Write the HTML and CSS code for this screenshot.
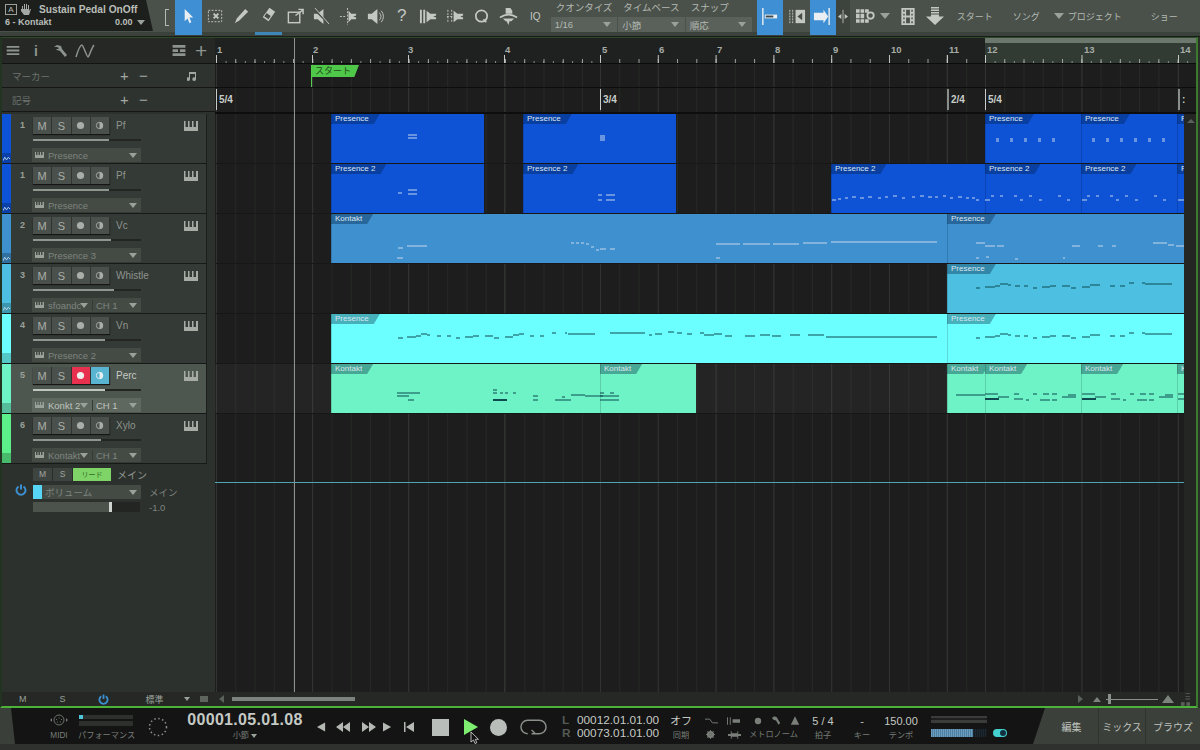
FILE: index.html
```html
<!DOCTYPE html>
<html lang="ja">
<head>
<meta charset="utf-8">
<title>Sustain Pedal OnOff</title>
<link rel="stylesheet" href="styles.css">
</head>
<body>

<svg class="defs" xmlns="http://www.w3.org/2000/svg">
    <symbol id="piano" viewBox="0 0 14 10">
        <path fill="currentColor" d="M0 0h1.500v6H4V0h1.500v6H8V0h1.500v6H12V0h2v10H0z"/>
    </symbol>
    <symbol id="mini-piano" viewBox="0 0 9 6">
        <path fill="currentColor" d="M0 0h1v3h1.500V0h1v3H5V0h1v3h1.500V0H9v6H0z"/>
    </symbol>
    <symbol id="wave" viewBox="0 0 8 6">
        <path fill="none" stroke="currentColor" d="M0 5 L2 1 L4 4 L6 1 L8 3"/>
    </symbol>
    <symbol id="rec" viewBox="0 0 10 10">
        <circle fill="currentColor" cx="5" cy="5" r="4"/>
    </symbol>
    <symbol id="mono" viewBox="0 0 10 10">
        <circle fill="none" stroke="currentColor" cx="5" cy="5" r="3.500"/>
        <path fill="currentColor" d="M5 1a4 4 0 0 1 0 8z"/>
    </symbol>
    <symbol id="power" viewBox="0 0 12 12">
        <path fill="none" stroke="currentColor" stroke-width="2" d="M3.500 2.500a4.500 4.500 0 1 0 5 0M6 0.500v5"/>
    </symbol>
</svg>

<header class="topbar">
    <div class="song">
        <div class="song-line">
            <span class="song-a">A</span>
            <svg class="song-hand" viewBox="0 0 12 12"><path fill="currentColor" d="M2 6V3h1v3h1V1h1v5h1V1h1v5h1V2h1v6l1-2h1l-2 6H4L1 8V6z"/></svg>
            <span class="song-title">Sustain Pedal OnOff</span>
        </div>
        <div class="song-line song-sub">
            <span class="song-track">6 - Kontakt</span>
            <span class="song-val">0.00</span>
            <span class="arrow song-arrow"></span>
        </div>
    </div>
    <div class="bracket"></div>
    <div class="tools">
        <div class="tool tool-on"><svg viewBox="0 0 20 20"><path fill="#e8eef2" d="M6 2l9 9h-4l2 5-2 1-2-5-3 3z"/></svg></div>
        <div class="tool"><svg viewBox="0 0 20 20"><rect x="2.500" y="3.500" width="14" height="12" fill="none" stroke="currentColor" stroke-dasharray="2 1.500"/><path stroke="currentColor" stroke-width="2" d="M8 7l5 5M13 7l-5 5"/></svg></div>
        <div class="tool"><svg viewBox="0 0 20 20"><path fill="currentColor" d="M14 2l3 3-9 9-5 3 2-5z"/></svg></div>
        <div class="tool tool-under"><svg viewBox="0 0 20 20"><path fill="currentColor" d="M11 3l6 4-7 10-6-4z"/><path fill="#474d46" d="M8 8l5 3.500-3 4-5-3.500z"/><path fill="none" stroke="currentColor" d="M8 8l5 3.500-3 4-5-3.500z"/></svg></div>
        <div class="tool"><svg viewBox="0 0 20 20"><rect x="2.500" y="5.500" width="12" height="11" fill="none" stroke="currentColor" stroke-width="1.500"/><path fill="none" stroke="currentColor" stroke-width="1.500" d="M10 9l8-6M13 2.500h5v5"/></svg></div>
        <div class="tool"><svg viewBox="0 0 20 20"><path fill="currentColor" d="M2 7h4l6-5v16l-6-5H2z"/><path stroke="#474d46" stroke-width="2" d="M2 2l16 16"/><path stroke="currentColor" d="M3 1l15 17"/></svg></div>
        <div class="tool"><svg viewBox="0 0 20 20"><path fill="currentColor" d="M10 4l3 3h5v2l-3 1 3 1v2h-5l-3 3z"/><path stroke="currentColor" stroke-dasharray="2 1.500" d="M9 1v18M1 10h7"/></svg></div>
        <div class="tool"><svg viewBox="0 0 20 20"><path fill="currentColor" d="M2 7h4l6-5v16l-6-5H2z"/><path fill="none" stroke="currentColor" d="M14 6a6 6 0 0 1 0 8M16 4a9 9 0 0 1 0 12"/></svg></div>
        <div class="tool tool-help">?</div>
        <div class="tool"><svg viewBox="0 0 20 20"><path fill="currentColor" d="M8 4l4 3h6v2l-3 1 3 1v2h-6l-4 3z"/><path stroke="currentColor" stroke-width="2" d="M2 3v14M5.500 3v14"/></svg></div>
        <div class="tool"><svg viewBox="0 0 20 20"><path fill="currentColor" d="M8 4l4 3h6v2l-3 1 3 1v2h-6l-4 3z"/><path stroke="currentColor" stroke-dasharray="2 1.500" d="M2 3v14M6 3v14M1 10h7"/></svg></div>
        <div class="tool"><svg viewBox="0 0 20 20"><circle cx="10" cy="9.500" r="6" fill="none" stroke="currentColor" stroke-width="1.800"/><path stroke="currentColor" stroke-width="1.800" d="M12 13l3 3"/></svg></div>
        <div class="tool"><svg viewBox="0 0 20 20"><path fill="currentColor" d="M7 1h5l2 3v3H7z"/><path fill="none" stroke="currentColor" stroke-width="1.800" d="M1 11q9-6 18 0"/><path fill="currentColor" d="M4 12h12l-3 3h-2l-1 4-2-4H7z"/></svg></div>
        <div class="tool tool-iq">IQ</div>
    </div>
    <div class="drops">
        <div class="drop"><span class="drop-label">クオンタイズ</span><div class="drop-box"><span>1/16</span><span class="arrow"></span></div></div>
        <div class="drop"><span class="drop-label">タイムベース</span><div class="drop-box"><span>小節</span><span class="arrow"></span></div></div>
        <div class="drop"><span class="drop-label">スナップ</span><div class="drop-box"><span>順応</span><span class="arrow"></span></div></div>
    </div>
    <div class="tool tool-on tool-snap"><svg viewBox="0 0 20 20"><path stroke="#e8eef2" stroke-width="1.500" d="M3 1v18"/><path fill="#e8eef2" d="M5 8h13v4H5z"/><path fill="#3f4a4f" d="M6 9h8v2H6z"/></svg></div>
    <div class="tool tool-snap2"><svg viewBox="0 0 20 20"><path stroke="currentColor" stroke-dasharray="2 1" d="M3 3v14M6 3v14"/><rect x="9" y="3" width="10" height="14" fill="currentColor"/><path fill="#474d46" d="M11 10l5-4v8z"/></svg></div>
    <div class="tool tool-on tool-snap"><svg viewBox="0 0 20 20"><path stroke="#e8eef2" stroke-width="1.500" d="M17 1v18"/><path fill="#e8eef2" d="M1 6h10V3l5 7-5 7v-3H1z"/></svg></div>
    <div class="tool tool-narrow"><svg viewBox="0 0 12 20"><path stroke="currentColor" d="M6 2v16"/><path fill="currentColor" d="M0 10l4-3v6zM12 10l-4-3v6z"/></svg></div>
    <div class="tool tool-grid"><svg viewBox="0 0 22 18"><path fill="currentColor" d="M0 1h4v4H0zM5 1h4v4H5zM10 1h4v4h-4zM0 6h4v5H0zM5 6h4v5H5zM0 12h4v4H0zM5 12h4v4H5zM10 12h4v4h-4z"/><circle cx="16" cy="8" r="3.500" fill="none" stroke="currentColor" stroke-width="2"/></svg><span class="arrow arrow-big"></span></div>
    <div class="tool tool-film"><svg viewBox="0 0 14 20"><path fill="currentColor" fill-rule="evenodd" d="M0 1h14v18H0zM2 3v2h1.500V3zM2 7v2h1.500V7zM2 11v2h1.500v-2zM2 15v2h1.500v-2zM10.500 3v2H12V3zM10.500 7v2H12V7zM10.500 11v2H12v-2zM10.500 15v2H12v-2zM5 3v6h4V3zM5 11v6h4v-6z"/></svg></div>
    <div class="tool tool-down"><svg viewBox="0 0 20 20"><path fill="currentColor" d="M6 1h8v1.500H6zM6 3.500h8V5H6zM6 6h8v1.500H6zM6 8.500h8v2h5L10 19 1 10.500h5z"/></svg></div>
    <div class="views">
        <span class="view view-start">スタート</span>
        <span class="view view-song">ソング</span>
        <span class="view view-project"><span class="arrow arrow-big"></span>プロジェクト</span>
        <span class="view view-show">ショー</span>
    </div>
</header>

<main class="main">
    <div class="workspace">

        <aside class="panel">
            <div class="panel-head">
                <svg class="ph-menu" viewBox="0 0 14 10"><path fill="currentColor" d="M0 0h14v2H0zM0 4h14v2H0zM0 8h14v2H0z"/></svg>
                <span class="ph-info">i</span>
                <svg class="ph-wrench" viewBox="0 0 14 14"><path fill="currentColor" d="M1 3l3-2 4 1 1 3 5 6-2 2-5-6-3-1-1-1 2 0 1-1-2-1z"/></svg>
                <svg class="ph-curve" viewBox="0 0 20 14"><path fill="none" stroke="currentColor" stroke-width="1.500" d="M1 13C4 3 6 1 7 1s5 12 6 12 3-8 6-12"/></svg>
                <svg class="ph-list" viewBox="0 0 14 12"><path fill="currentColor" d="M0 0h14v3H0zM0 4.500h6v3H0zM8 4.500h6v3H8zM0 9h14v3H0z"/></svg>
                <span class="ph-plus">+</span>
            </div>
            <div class="panel-row">
                <span class="row-label">マーカー</span>
                <span class="row-plus">+</span><span class="row-minus">−</span>
                <svg class="row-note" viewBox="0 0 10 10"><path fill="currentColor" d="M2 1h7v7a1.800 1.800 0 1 1-1-1.500V3H3v5a1.800 1.800 0 1 1-1-1.500z"/></svg>
            </div>
            <div class="panel-row">
                <span class="row-label">記号</span>
                <span class="row-plus">+</span><span class="row-minus">−</span>
            </div>

            <div class="tracks">
                <div class="track">
                    <div class="strip c-blue"><span class="strip-foot"><svg><use href="#wave"/></svg></span></div>
                    <span class="num">1</span>
                    <div class="body">
                        <div class="line">
                            <div class="btns"><span class="btn">M</span><span class="btn">S</span><span class="btn"><svg><use href="#rec"/></svg></span><span class="btn"><svg><use href="#mono"/></svg></span></div>
                            <span class="name">Pf</span>
                            <svg class="piano"><use href="#piano"/></svg>
                        </div>
                        <div class="fader"><div class="fader-fill" style="width:76px"></div></div>
                        <div class="select"><svg class="mini"><use href="#mini-piano"/></svg><span class="select-text">Presence</span><span class="arrow"></span></div>
                    </div>
                </div>
                <div class="track">
                    <div class="strip c-blue"><span class="strip-foot"><svg><use href="#wave"/></svg></span></div>
                    <span class="num">1</span>
                    <div class="body">
                        <div class="line">
                            <div class="btns"><span class="btn">M</span><span class="btn">S</span><span class="btn"><svg><use href="#rec"/></svg></span><span class="btn"><svg><use href="#mono"/></svg></span></div>
                            <span class="name">Pf</span>
                            <svg class="piano"><use href="#piano"/></svg>
                        </div>
                        <div class="fader"><div class="fader-fill" style="width:76px"></div></div>
                        <div class="select"><svg class="mini"><use href="#mini-piano"/></svg><span class="select-text">Presence</span><span class="arrow"></span></div>
                    </div>
                </div>
                <div class="track">
                    <div class="strip c-sky"><span class="strip-foot"><svg><use href="#wave"/></svg></span></div>
                    <span class="num">2</span>
                    <div class="body">
                        <div class="line">
                            <div class="btns"><span class="btn">M</span><span class="btn">S</span><span class="btn"><svg><use href="#rec"/></svg></span><span class="btn"><svg><use href="#mono"/></svg></span></div>
                            <span class="name">Vc</span>
                            <svg class="piano"><use href="#piano"/></svg>
                        </div>
                        <div class="fader"><div class="fader-fill" style="width:78px"></div></div>
                        <div class="select"><svg class="mini"><use href="#mini-piano"/></svg><span class="select-text">Presence 3</span><span class="arrow"></span></div>
                    </div>
                </div>
                <div class="track">
                    <div class="strip c-cyan"><span class="strip-foot"><svg><use href="#wave"/></svg></span></div>
                    <span class="num">3</span>
                    <div class="body">
                        <div class="line">
                            <div class="btns"><span class="btn">M</span><span class="btn">S</span><span class="btn"><svg><use href="#rec"/></svg></span><span class="btn"><svg><use href="#mono"/></svg></span></div>
                            <span class="name">Whistle</span>
                            <svg class="piano"><use href="#piano"/></svg>
                        </div>
                        <div class="fader"><div class="fader-fill" style="width:81px"></div></div>
                        <div class="select"><svg class="mini"><use href="#mini-piano"/></svg><span class="select-text select-cut">sfoandc</span><span class="arrow"></span><span class="select-ch">CH 1</span><span class="arrow"></span></div>
                    </div>
                </div>
                <div class="track">
                    <div class="strip c-aqua"><span class="strip-foot"></span></div>
                    <span class="num">4</span>
                    <div class="body">
                        <div class="line">
                            <div class="btns"><span class="btn">M</span><span class="btn">S</span><span class="btn"><svg><use href="#rec"/></svg></span><span class="btn"><svg><use href="#mono"/></svg></span></div>
                            <span class="name">Vn</span>
                            <svg class="piano"><use href="#piano"/></svg>
                        </div>
                        <div class="fader"><div class="fader-fill" style="width:72px"></div></div>
                        <div class="select"><svg class="mini"><use href="#mini-piano"/></svg><span class="select-text">Presence 2</span><span class="arrow"></span></div>
                    </div>
                </div>
                <div class="track track-sel">
                    <div class="strip c-mint"><span class="strip-foot"></span></div>
                    <span class="num">5</span>
                    <div class="body">
                        <div class="line">
                            <div class="btns"><span class="btn">M</span><span class="btn">S</span><span class="btn btn-rec"><svg><use href="#rec"/></svg></span><span class="btn btn-mon"><svg><use href="#mono"/></svg></span></div>
                            <span class="name">Perc</span>
                            <svg class="piano"><use href="#piano"/></svg>
                        </div>
                        <div class="fader"><div class="fader-fill" style="width:72px"></div></div>
                        <div class="select"><svg class="mini"><use href="#mini-piano"/></svg><span class="select-text select-cut">Konkt 2</span><span class="arrow"></span><span class="select-ch">CH 1</span><span class="arrow"></span></div>
                    </div>
                </div>
                <div class="track">
                    <div class="strip c-green"><span class="strip-foot"></span></div>
                    <span class="num">6</span>
                    <div class="body">
                        <div class="line">
                            <div class="btns"><span class="btn">M</span><span class="btn">S</span><span class="btn"><svg><use href="#rec"/></svg></span><span class="btn"><svg><use href="#mono"/></svg></span></div>
                            <span class="name">Xylo</span>
                            <svg class="piano"><use href="#piano"/></svg>
                        </div>
                        <div class="fader"><div class="fader-fill" style="width:68px"></div></div>
                        <div class="select"><svg class="mini"><use href="#mini-piano"/></svg><span class="select-text select-cut">Kontakt</span><span class="arrow"></span><span class="select-ch">CH 1</span><span class="arrow"></span></div>
                    </div>
                </div>
            </div>

            <div class="master">
                <div class="master-line">
                    <span class="mbtn">M</span><span class="mbtn">S</span><span class="mbtn mbtn-lead">リード</span>
                    <span class="master-name">メイン</span>
                </div>
                <div class="master-line master-auto">
                    <svg class="master-power"><use href="#power"/></svg>
                    <span class="master-color"></span>
                    <div class="select master-select"><span class="select-text">ボリューム</span><span class="arrow"></span></div>
                    <span class="master-label">メイン</span>
                </div>
                <div class="master-line master-vol">
                    <div class="master-fader"><span class="master-fill"></span><span class="master-knob"></span></div>
                    <span class="master-label">-1.0</span>
                </div>
            </div>
        </aside>

        <section class="timeline">
            <div class="grid">
                <div class="sec" style="width:384px;--bar:96px"></div>
                <div class="sec" style="width:347px;--bar:57.8px"></div>
                <div class="sec" style="width:38px;--bar:38px"></div>
                <div class="sec" style="width:212px;--bar:96.500px"></div>
            </div>

            <div class="ruler">
                <div class="loop"></div>
                <div class="ruler-ticks">
                    <div class="rsec rsec-fine" style="width:384px;--bar:96px"></div>
                    <div class="rsec" style="width:347px;--bar:57.8px"></div>
                    <div class="rsec" style="width:38px;--bar:38px"></div>
                    <div class="rsec rsec-fine" style="width:212px;--bar:96.500px"></div>
                </div>
                <span class="barnum" style="left:2px">1</span>
                <span class="barnum" style="left:98px">2</span>
                <span class="barnum" style="left:193px">3</span>
                <span class="barnum" style="left:290px">4</span>
                <span class="barnum" style="left:387px">5</span>
                <span class="barnum" style="left:444px">6</span>
                <span class="barnum" style="left:502px">7</span>
                <span class="barnum" style="left:560px">8</span>
                <span class="barnum" style="left:618px">9</span>
                <span class="barnum" style="left:676px">10</span>
                <span class="barnum" style="left:734px">11</span>
                <span class="barnum" style="left:772px">12</span>
                <span class="barnum" style="left:869px">13</span>
                <span class="barnum" style="left:965px">14</span>
            </div>
            <div class="marker-row">
                <div class="flag"><span class="flag-tag">スタート</span></div>
            </div>
            <div class="sig-row">
                <span class="sig" style="left:1px">5/4</span>
                <span class="sig" style="left:385px">3/4</span>
                <span class="sig sig-thick" style="left:732px">2/4</span>
                <span class="sig" style="left:770px">5/4</span>
                <span class="sig sig-thick" style="left:963px">:</span>
            </div>

            <div class="lanes">
                <div class="lane">
                    <div class="clip c-blue" style="left:116px;width:153px"><span class="tag">Presence</span></div>
                    <div class="clip c-blue" style="left:308px;width:153px"><span class="tag">Presence</span></div>
                    <div class="clip c-blue" style="left:770px;width:96px"><span class="tag">Presence</span></div>
                    <div class="clip c-blue" style="left:866px;width:96px"><span class="tag">Presence</span></div>
                    <div class="clip c-blue" style="left:962px;width:7px"><span class="tag">P</span></div>
                    <svg class="notes" viewBox="215 0 969 50"><path class="n-light" d="M408 21h9M408 24h9M600 22h5M600 24h5M600 26h5"/><path class="n-light" stroke-dasharray="3 11" d="M996 25h70M996 27h70M1092 25h80M1092 27h80"/></svg>
                </div>
                <div class="lane">
                    <div class="clip c-blue" style="left:116px;width:153px"><span class="tag">Presence 2</span></div>
                    <div class="clip c-blue" style="left:308px;width:153px"><span class="tag">Presence 2</span></div>
                    <div class="clip c-blue" style="left:616px;width:154px"><span class="tag">Presence 2</span></div>
                    <div class="clip c-blue" style="left:770px;width:96px"><span class="tag">Presence 2</span></div>
                    <div class="clip c-blue" style="left:866px;width:96px"><span class="tag">Presence 2</span></div>
                    <div class="clip c-blue" style="left:962px;width:7px"><span class="tag">P</span></div>
                    <svg class="notes" viewBox="215 0 969 50"><path class="n-light" d="M398 29h4M408 26h9M408 30h9M598 31h4M606 31h9M598 36h4M606 36h9M832 36h4M838 35h3M845 34h3M852 33h4M860 34h4M868 33h4M878 34h3M885 33h3M893 32h4M902 34h3M912 33h3M920 32h4M928 33h4M935 33h3M943 32h3M950 34h3M958 33h4M966 34h3M972 34h3M976 36h3M985 36h5M991 32h3M1000 32h3M1014 32h3M1020 36h3M1029 32h3M1039 36h3M1058 32h3M1067 36h3M1082 36h5M1087 32h3M1096 32h3M1110 32h3M1116 36h3M1125 32h3M1135 36h3M1154 32h3M1163 36h3M1178 36h6"/></svg>
                </div>
                <div class="lane">
                    <div class="clip c-sky" style="left:116px;width:616px"><span class="tag">Kontakt</span></div>
                    <div class="clip c-sky" style="left:732px;width:237px"><span class="tag">Presence</span></div>
                    <svg class="notes" viewBox="215 0 969 50"><path class="n-light" d="M398 34h5M407 32h20M397 44h6M571 29h3M576 29h3M581 29h3M586 30h3M591 33h3M596 36h3M600 35h6M610 35h5M716 30h24M743 30h27M773 30h26M803 29h24M831 28h106M716 44h4M976 29h9M985 32h10M997 32h7M1072 32h8M1098 32h5M1112 32h4M1153 29h14M1168 31h6M1176 32h8M976 44h3M986 43h3M1015 45h3M1063 44h2"/></svg>
                </div>
                <div class="lane">
                    <div class="clip c-cyan" style="left:732px;width:237px"><span class="tag">Presence</span></div>
                    <svg class="notes" viewBox="215 0 969 50"><path class="n-dark" d="M976 24h4M985 23h10M995 22h5M1000 20h8M1008 21h3M1015 22h5M1024 22h4M1033 24h4M1042 23h8M1050 22h6M1062 22h8M1071 24h5M1082 23h8M1090 21h10M1110 22h5M1120 22h5M1129 19h5M1142 19h3M1145 20h27"/></svg>
                </div>
                <div class="lane">
                    <div class="clip c-aqua" style="left:116px;width:616px"><span class="tag">Presence</span></div>
                    <div class="clip c-aqua" style="left:732px;width:237px"><span class="tag">Presence</span></div>
                    <svg class="notes" viewBox="215 0 969 50"><path class="n-dark" d="M398 24h5M407 23h9M416 22h5M421 20h6M427 21h3M437 22h4M447 22h4M456 24h4M465 23h8M473 22h6M485 22h8M494 24h5M505 23h8M513 21h6M519 20h5M530 22h4M540 22h4M552 19h4M565 19h2M568 20h27M610 19h35M649 21h3M655 20h7M668 18h6M677 19h5M687 20h5M700 19h4M704 21h10M714 20h8M725 22h7M745 22h10M760 21h10M772 22h9M790 21h10M808 21h16M826 23h111M976 24h4M985 23h10M995 22h5M1000 20h8M1008 21h3M1015 22h5M1024 22h4M1033 24h4M1042 23h8M1050 22h6M1062 22h8M1071 24h5M1082 23h8M1090 21h10M1110 22h5M1120 22h5M1129 19h5M1142 19h3M1145 20h27"/></svg>
                </div>
                <div class="lane lane-sel">
                    <div class="clip c-mint" style="left:116px;width:269px"><span class="tag">Kontakt</span></div>
                    <div class="clip c-mint" style="left:385px;width:96px"><span class="tag">Kontakt</span></div>
                    <div class="clip c-mint" style="left:732px;width:38px"><span class="tag">Kontakt</span></div>
                    <div class="clip c-mint" style="left:770px;width:96px"><span class="tag">Kontakt</span></div>
                    <div class="clip c-mint" style="left:866px;width:96px"><span class="tag">Kontakt</span></div>
                    <div class="clip c-mint" style="left:962px;width:7px"><span class="tag">K</span></div>
                    <svg class="notes" viewBox="215 0 969 50"><path class="n-dark" d="M397 29h23M397 32h12M408 36h6M493 26h4M493 29h4M500 29h3M505 29h3M513 29h3M533 32h5M533 36h5M555 36h16M562 33h3M571 31h14M585 32h18M600 29h4M610 29h4M600 32h19M600 36h19M956 31h29M985 30h13M998 33h11M1014 30h5M1014 35h9M1026 36h3M1033 30h4M1040 36h10M1043 30h6M1052 30h5M1052 36h5M1062 33h14M1068 31h8M1082 30h13M1095 33h11M1111 30h5M1111 35h9M1123 36h3M1130 30h4M1137 36h10M1140 30h6M1149 30h5M1149 36h5M1159 33h14M1165 31h8M1178 30h6M1178 35h6"/><path class="n-thick" d="M493 36h14M985 35h14M1082 35h14"/></svg>
                </div>
                <div class="lane"></div>
            </div>

            <div class="auto-line"></div>
            <div class="playhead"></div>
            <div class="vscroll"><span class="vscroll-up"></span></div>
        </section>
    </div>

    <div class="bottombar">
        <span class="bb-m">M</span>
        <span class="bb-s">S</span>
        <svg class="bb-power"><use href="#power"/></svg>
        <span class="bb-std">標準</span>
        <span class="arrow"></span>
        <svg class="bb-lines" viewBox="0 0 10 6"><path fill="currentColor" d="M0 0h10v1H0zM0 2.500h10v1H0zM0 5h10v1H0z"/></svg>
        <span class="bb-left"></span>
        <div class="hscroll"></div>
        <span class="bb-right"></span>
        <span class="zoom-small"></span>
        <div class="zoom-track"><span class="zoom-knob"></span></div>
        <span class="zoom-big"></span>
        <svg class="bb-corner" viewBox="0 0 10 14"><path fill="currentColor" d="M5 0h5v1H5zM5 3h5v1H5zM5 6h5v1H5zM0 10h4v4H0zM6 10h4v4H6z"/></svg>
    </div>
</main>

<footer class="transport">
    <span class="wedge"></span>
    <div class="tp tp-midi">
        <svg viewBox="0 0 20 14"><circle cx="10" cy="7" r="5" fill="none" stroke="currentColor"/><path fill="currentColor" d="M7 6h1v1H7zM9.500 4.500h1v1h-1zM12 6h1v1h-1zM8 8.500h1v1H8zM11 8.500h1v1h-1zM1 7l2-2v4zM19 7l-2-2v4z"/></svg>
        <span class="tp-label">MIDI</span>
    </div>
    <div class="tp tp-perf">
        <div class="meter"><span class="meter-led"></span></div>
        <div class="meter meter-low"></div>
        <span class="tp-label">パフォーマンス</span>
    </div>
    <svg class="spinner" viewBox="0 0 20 20"><circle cx="10" cy="10" r="8.500" fill="none" stroke="currentColor" stroke-width="1.500" stroke-dasharray="1.500 2.500"/></svg>
    <div class="tp tp-time">
        <span class="time-main">00001.05.01.08</span>
        <span class="tp-label">小節 <span class="arrow"></span></span>
    </div>
    <div class="transport-btns">
        <svg viewBox="0 0 10 10" class="tb-1"><path fill="currentColor" d="M0 5l9-5v10z"/></svg>
        <svg viewBox="0 0 15 10" class="tb-2"><path fill="currentColor" d="M0 5l7-5v10zM7 5l7-5v10z"/></svg>
        <svg viewBox="0 0 15 10" class="tb-3"><path fill="currentColor" d="M14 5L7 0v10zM7 5L0 0v10z"/></svg>
        <svg viewBox="0 0 10 10" class="tb-4"><path fill="currentColor" d="M9 5L0 0v10z"/></svg>
        <svg viewBox="0 0 10 10" class="tb-5"><path fill="currentColor" d="M0 0h1.500v10H0zM10 0v10L2 5z"/></svg>
        <span class="stop"></span>
        <div class="play-wrap">
            <svg class="play" viewBox="0 0 14 16"><path fill="#7dee6f" d="M0 0l14 8-14 8z"/></svg>
            <svg class="cursor" viewBox="0 0 10 14"><path fill="#111" stroke="#ddd" stroke-width="0.800" d="M1 1v10l2.500-2 1.500 3.500 1.800-.8L5.300 8.300H8.500z"/></svg>
        </div>
        <span class="record"></span>
        <svg class="loop-btn" viewBox="0 0 28 16"><path fill="none" stroke="currentColor" stroke-width="1.500" d="M8 15C4 15 1 12 1 8s3-7 7-7h12c4 0 7 3 7 7s-3 7-7 7h-4M12 11l4 4-4 0"/></svg>
    </div>
    <div class="locators">
        <div class="loc"><span class="loc-key">L</span><span>00012.01.01.00</span></div>
        <div class="loc"><span class="loc-key">R</span><span>00073.01.01.00</span></div>
    </div>
    <div class="tp tp-sync"><span class="tp-val">オフ</span><span class="tp-label">同期</span></div>
    <div class="metro">
        <div class="metro-icons">
            <svg viewBox="0 0 14 8"><path fill="none" stroke="currentColor" d="M0 2h5l3 4h6"/></svg>
            <svg viewBox="0 0 14 8"><path fill="currentColor" d="M0 0h1v8H0zM3 0h1v8H3zM6 2h8v4H6z"/></svg>
            <svg viewBox="0 0 10 10" class="metro-dot"><circle cx="5" cy="5" r="4" fill="currentColor"/></svg>
            <svg viewBox="0 0 12 10" class="metro-small"><path fill="currentColor" d="M1 2l3-2 3 1 1 2 3 5-2 2-3-5-3-1z"/></svg>
            <svg viewBox="0 0 12 10" class="metro-small"><path fill="currentColor" d="M6 0l5 10H1z"/></svg>
        </div>
        <div class="metro-bottom">
            <svg viewBox="0 0 10 10" class="metro-gear"><circle cx="5" cy="5" r="3" fill="none" stroke="currentColor" stroke-width="2"/><path stroke="currentColor" d="M5 0v10M0 5h10M1.500 1.500l7 7M8.500 1.500l-7 7"/></svg>
            <svg viewBox="0 0 14 8" class="metro-pin"><path fill="currentColor" d="M0 3h14v2H0zM3 0h1v8H3zM10 0h1v8h-1zM4 2h6v4H4z"/></svg>
            <span class="tp-label">メトロノーム</span>
        </div>
    </div>
    <div class="tp tp-beat"><span class="tp-val">5 / 4</span><span class="tp-label">拍子</span></div>
    <div class="tp tp-key"><span class="tp-val">-</span><span class="tp-label">キー</span></div>
    <div class="tp tp-tempo"><span class="tp-val">150.00</span><span class="tp-label">テンポ</span></div>
    <div class="levels">
        <div class="lvl lvl-top"></div>
        <div class="lvl-row">
            <div class="lvl lvl-on"><span class="lvl-fill"></span></div>
            <span class="toggle"><span class="toggle-dot"></span></span>
        </div>
    </div>
    <div class="tabs">
        <span class="tab tab-edit">編集</span>
        <span class="tab tab-mix">ミックス</span>
        <span class="tab tab-browse">ブラウズ</span>
    </div>
</footer>

</body>
</html>
```

FILE: styles.css
```css
html, body {
    margin: 0;
    padding: 0;
}

body {
    width: 1200px;
    height: 750px;
    overflow: hidden;
    display: flex;
    flex-direction: column;
    background: #2b2f2b;
    color: #b4b9b3;
    font-family: "Liberation Sans", "Noto Sans CJK JP", sans-serif;
    font-size: 10px;
}

svg {
    display: block;
}

.defs {
    position: absolute;
    width: 0;
    height: 0;
}

.arrow {
    display: inline-block;
    flex: none;
    width: 0;
    height: 0;
    border-left: 4px solid transparent;
    border-right: 4px solid transparent;
    border-top: 5px solid #9aa09a;
}
.arrow-big {
    border-left-width: 5px;
    border-right-width: 5px;
    border-top-width: 6px;
}

/* colours shared by track strips and clips */
.c-blue { background: #0e52d6; }
.c-sky { background: #3e90cf; }
.c-cyan { background: #4dc0e2; }
.c-aqua { background: #6cffff; }
.c-mint { background: #6df3c6; }
.c-green { background: #5cf08a; }

/* top toolbar */
.topbar {
    flex: none;
    height: 36px;
    display: flex;
    background: linear-gradient(#4a514a 0, #4a514a 32px, #3b413b 32px);
    border-bottom: 1px solid #1a1c1a;
}

.song {
    flex: none;
    width: 153px;
    height: 31px;
    padding: 3px 0 0 5px;
    box-sizing: border-box;
    background: #1d1f1d;
    clip-path: polygon(0 0, 146px 0, 153px 100%, 0 100%);
    font-weight: bold;
    color: #b9beb8;
}
.song-line {
    display: flex;
    align-items: center;
}
.song-a {
    width: 10px;
    height: 9px;
    margin-right: 3px;
    border: 1px solid #9a9f9a;
    font-size: 8px;
    font-weight: normal;
    line-height: 9px;
    text-align: center;
}
.song-hand {
    width: 12px;
    height: 12px;
    margin-right: 7px;
    color: #a5a9a5;
}
.song-title {
    font-size: 10.200px;
}
.song-sub {
    margin-top: 2px;
    font-size: 9px;
}
.song-track {
    width: 110px;
}
.song-val {
    margin-right: 4px;
}

.bracket {
    flex: none;
    width: 3px;
    height: 15px;
    margin: 9px 6px 0 12px;
    border: 1px solid #b4b9b3;
    border-right: 0;
}

.tools {
    flex: none;
    display: flex;
}
.tool {
    flex: none;
    box-sizing: border-box;
    width: 26.700px;
    height: 32px;
    display: flex;
    align-items: center;
    justify-content: center;
    color: #c4c8c3;
}
.tool svg {
    width: 19px;
    height: 19px;
}
.tool-on {
    height: 35px;
    padding-bottom: 3px;
    background: #3f8fd4;
}
.tool-under {
    height: 35px;
    padding-bottom: 3px;
    border-bottom: 3px solid #3f86b8;
}
.tool-help {
    font-size: 17px;
}
.tool-iq {
    font-size: 10px;
}
.tool-snap {
    width: 26px;
}
.tool-snap2 {
    width: 27px;
}
.tool-narrow {
    width: 14px;
    background: #3d433d;
}
.tool-narrow svg {
    width: 10px;
}
.tool-grid {
    width: 46px;
    gap: 4px;
}
.tool-grid svg {
    width: 20px;
    flex: none;
}
.tool-film {
    width: 24px;
}
.tool-film svg {
    width: 14px;
}
.tool-down {
    width: 30px;
}
.tool-down svg {
    width: 20px;
    height: 20px;
}

.drops {
    flex: none;
    display: flex;
    width: 204px;
    margin-left: 2px;
    margin-right: 2px;
}
.drop {
    flex: none;
    width: 67.500px;
    padding-right: 1px;
    box-sizing: border-box;
    display: flex;
    flex-direction: column;
}
.drop-label {
    height: 17px;
    padding-left: 5px;
    font-size: 9.500px;
    line-height: 16px;
    color: #b4b9b3;
}
.drop-box {
    height: 15px;
    padding: 0 6px 0 4px;
    display: flex;
    align-items: center;
    justify-content: space-between;
    background: #5a615a;
    font-size: 9.500px;
}

.views {
    flex: 1;
    display: flex;
    align-items: center;
    height: 32px;
    font-size: 9px;
    color: #b4b9b3;
}
.view {
    display: flex;
    align-items: center;
    gap: 4px;
    white-space: nowrap;
}
.view-start { margin-left: 7px; }
.view-song { margin-left: 20px; }
.view-project { margin-left: 14px; }
.view-show { margin-left: 29px; }

/* green framed main area */
.main {
    flex: none;
    height: 671px;
    margin-right: 2px;
    display: flex;
    flex-direction: column;
    box-sizing: border-box;
    border-left: 2px solid #233322;
    border-top: 1px solid #2c4a28;
    border-right: 2px solid #3c7a2c;
    border-bottom: 2px solid #4db23a;
}

.workspace {
    flex: none;
    height: 654px;
    display: flex;
}

/* track column */
.panel {
    flex: none;
    width: 213px;
    display: flex;
    flex-direction: column;
    background: #2c312d;
    color: #a2a7a2;
}

.panel-head {
    flex: none;
    height: 26px;
    display: flex;
    align-items: center;
    background: #252825;
    border-bottom: 1px solid #121312;
    box-sizing: border-box;
    color: #8d938e;
}
.ph-menu {
    width: 14px;
    height: 9px;
    margin-left: 4px;
}
.ph-info {
    margin-left: 14px;
    font-size: 14px;
    font-weight: bold;
}
.ph-wrench {
    width: 14px;
    height: 14px;
    margin-left: 15px;
}
.ph-curve {
    width: 20px;
    height: 14px;
    margin-left: 8px;
}
.ph-list {
    width: 14px;
    height: 11px;
    margin-left: 77px;
}
.ph-plus {
    margin-left: 9px;
    font-size: 21px;
    line-height: 21px;
}

.panel-row {
    flex: none;
    height: 24px;
    box-sizing: border-box;
    display: flex;
    align-items: center;
    border-bottom: 1px solid #151615;
    background: #2e332f;
    color: #6d736e;
    font-size: 9.500px;
}
.row-label {
    width: 108px;
    margin-left: 10px;
}
.row-plus {
    width: 19px;
    font-size: 15px;
    color: #a2a7a2;
}
.row-minus {
    width: 20px;
    font-size: 15px;
    color: #a2a7a2;
}
.row-note {
    width: 10px;
    height: 10px;
    margin-left: 28px;
    color: #a2a7a2;
}

.tracks {
    margin-top: 2px;
    flex: none;
}
.track {
    height: 50px;
    box-sizing: border-box;
    width: 205px;
    display: flex;
    background: #343a35;
    border-bottom: 1px solid #171917;
    border-right: 1px solid #1c1e1c;
}
.track-sel {
    background: #4e574f;
    color: #c5cac4;
}
.strip {
    position: relative;
    flex: none;
    width: 9px;
}
.strip-foot {
    position: absolute;
    left: 0;
    right: 0;
    bottom: 0;
    height: 10px;
    background: rgba(0, 0, 0, 0.22);
    color: #c8ddea;
}
.strip-foot svg {
    width: 7px;
    height: 6px;
    margin: 3px 0 0 1px;
}
.num {
    flex: none;
    width: 22px;
    padding-top: 6px;
    box-sizing: border-box;
    padding-left: 9px;
    font-size: 9px;
    font-weight: bold;
    color: #9aa09a;
}
.body {
    flex: 1;
    padding-top: 3px;
    display: flex;
    flex-direction: column;
}
.line {
    display: flex;
    align-items: center;
    height: 17px;
}
.btns {
    flex: none;
    display: flex;
    width: 77px;
    height: 17px;
    box-shadow: 0 1px 1px #151615;
}
.btn {
    flex: 1;
    display: flex;
    align-items: center;
    justify-content: center;
    background: #4a504b;
    border-right: 1px solid #2f342f;
    font-size: 11px;
    color: #a9aea9;
}
.btn svg {
    width: 9px;
    height: 9px;
}
.btn-rec {
    background: #e8304f;
    color: #eef0ee;
}
.btn-mon {
    background: #58b4d0;
    color: #e5eef0;
}
.name {
    flex: 1;
    margin-left: 6px;
    font-size: 10px;
    color: #8e948f;
}
.track-sel .name {
    color: #c5cac4;
}
.piano {
    flex: none;
    width: 14px;
    height: 10px;
    margin-right: 8px;
    color: #a6aba6;
}

.fader {
    width: 108px;
    height: 2px;
    margin-top: 5px;
    background: #222522;
}
.fader-fill {
    height: 2px;
    background: #8f958f;
}
.track-sel .fader-fill {
    background: #c0c5c0;
}

.select {
    display: flex;
    align-items: center;
    width: 109px;
    height: 14px;
    margin-top: 7px;
    margin-left: -1px;
    padding: 0 4px 0 3px;
    box-sizing: border-box;
    background: #444b45;
    font-size: 9.500px;
    color: #7e847f;
}
.track-sel .select {
    background: #5e685f;
    color: #bfc4be;
}
.mini {
    flex: none;
    width: 9px;
    height: 6px;
    margin-right: 4px;
    color: #9aa09a;
}
.select-text {
    flex: 1;
    white-space: nowrap;
    overflow: hidden;
}
.select-cut {
    flex: none;
    width: 33px;
}
.select-cut + .arrow {
    margin-left: -1px;
    margin-right: 4px;
}
.select-ch {
    flex: 1;
    padding-left: 3px;
    border-left: 1px solid #343a35;
}

/* master row under the tracks */
.master {
    flex: 1;
    padding: 3px 0 0 31px;
    position: relative;
    background: #2c312d;
}
.master-line {
    display: flex;
    align-items: center;
}
.mbtn {
    width: 19px;
    height: 13px;
    background: #3e443f;
    border-right: 1px solid #2a2e2a;
    font-size: 8.500px;
    line-height: 13px;
    text-align: center;
}
.mbtn-lead {
    width: 38px;
    border: 0;
    background: #7fd468;
    color: #2e6a24;
    font-size: 7px;
}
.master-name {
    margin-left: 6px;
    font-size: 10px;
    color: #8e948f;
}
.master-auto {
    margin-top: 3px;
    height: 14px;
}
.master-power {
    position: absolute;
    left: 13px;
    top: 20px;
    width: 12px;
    height: 12px;
    color: #3c8fd0;
}
.master-color {
    flex: none;
    width: 9px;
    height: 14px;
    background: #56d5f5;
}
.master-select {
    width: 99px;
    margin-top: 0;
    margin-left: 0;
}
.master-label {
    margin-left: 8px;
    font-size: 9.500px;
    color: #7e847f;
}
.master-vol {
    margin-top: 3px;
    height: 10px;
}
.master-fader {
    position: relative;
    flex: none;
    width: 107px;
    height: 10px;
    background: #222522;
}
.master-fill {
    position: absolute;
    left: 0;
    top: 0;
    bottom: 0;
    width: 77px;
    background: #4c534d;
}
.master-knob {
    position: absolute;
    left: 76px;
    top: 0;
    bottom: 0;
    width: 3px;
    background: #cfd3cf;
}
.master-vol .master-label {
    margin-left: 9px;
}

/* arrangement */
.timeline {
    position: relative;
    flex: 1;
    background: #1c1d1c;
    overflow: hidden;
}

.grid {
    position: absolute;
    left: 1px;
    top: 0;
    bottom: 0;
    display: flex;
}
.sec {
    flex: none;
    background-image:
        linear-gradient(90deg, #303330 1px, transparent 1px),
        linear-gradient(90deg, #272927 1px, transparent 1px);
    background-size: var(--bar) 100%, 19.270px 100%;
}

.ruler {
    position: relative;
    height: 26px;
    box-sizing: border-box;
    background: #1f2120;
    border-bottom: 1px solid #0a0b0a;
}
.loop {
    position: absolute;
    left: 770px;
    top: 0;
    right: 0;
    bottom: 0;
    background: linear-gradient(#6c786d 0, #6c786d 5px, #313b33 5px);
}
.ruler-ticks {
    position: absolute;
    left: 1px;
    bottom: 0;
    height: 8px;
    display: flex;
}
.rsec {
    flex: none;
    background-repeat: repeat-x;
    background-position: 0 100%;
    background-image:
        linear-gradient(90deg, #c4c8c4 1px, transparent 1px),
        linear-gradient(90deg, #a0a4a0 1px, transparent 1px);
    background-size: var(--bar) 8px, 19.270px 4px;
}
.rsec-fine {
    background-image:
        linear-gradient(90deg, #c4c8c4 1px, transparent 1px),
        linear-gradient(90deg, #a0a4a0 1px, transparent 1px),
        linear-gradient(90deg, #8a8e8a 1px, transparent 1px);
    background-size: var(--bar) 8px, 19.270px 4px, 9.635px 2px;
}
.barnum {
    position: absolute;
    top: 6px;
    font-size: 9.500px;
    font-weight: bold;
    color: #a6aba6;
}

.marker-row {
    position: relative;
    height: 24px;
    box-sizing: border-box;
    border-bottom: 1px solid #0c0d0c;
}
.flag {
    position: absolute;
    left: 96px;
    top: 1px;
    height: 22px;
    border-left: 1px solid #55cc4a;
}
.flag-tag {
    display: block;
    width: 47px;
    height: 12px;
    padding-left: 3px;
    box-sizing: border-box;
    background: #4fc84a;
    clip-path: polygon(0 0, 100% 0, 90% 100%, 0 100%);
    color: #1f4a1a;
    font-size: 9px;
    line-height: 12px;
}

.sig-row {
    position: relative;
    height: 26px;
    box-sizing: border-box;
    border-bottom: 2px solid #0c0d0c;
}
.sig {
    position: absolute;
    top: 1px;
    height: 21px;
    padding-left: 2px;
    border-left: 1px solid #c8ccc8;
    font-size: 10px;
    font-weight: bold;
    line-height: 21px;
    color: #c8ccc8;
}
.sig-thick {
    border-left-width: 2px;
    border-left-color: #8a8e8a;
}

.lanes {
    position: relative;
    width: 969px;
}
.lane {
    position: relative;
    height: 50px;
    box-sizing: border-box;
    border-bottom: 1px solid #161716;
}
.lane:last-child {
    border-bottom: 0;
}
.lane-sel {
    background: rgba(255, 255, 255, 0.03);
}
.clip {
    position: absolute;
    top: 0;
    height: 49px;
    overflow: hidden;
    box-shadow: inset 1px 0 rgba(0, 0, 0, 0.15);
}
.tag {
    display: block;
    width: fit-content;
    height: 10px;
    padding: 0 11px 0 4px;
    background: rgba(0, 30, 60, 0.35);
    clip-path: polygon(0 0, 100% 0, calc(100% - 6px) 100%, 0 100%);
    font-size: 8px;
    line-height: 10px;
    color: #dbe6ef;
    white-space: nowrap;
}
.notes {
    position: absolute;
    left: 0;
    top: 0;
    width: 969px;
    height: 50px;
    fill: none;
}
.n-light {
    stroke: #c5d6ea;
    stroke-width: 1;
}
.n-dark {
    stroke: #0f4a50;
    stroke-width: 1;
}
.n-thick {
    stroke: #0f4a50;
    stroke-width: 2;
}

.auto-line {
    position: absolute;
    left: 0;
    width: 969px;
    top: 444px;
    height: 1px;
    background: #4fa4b0;
}
.playhead {
    position: absolute;
    left: 79px;
    top: 0;
    bottom: 0;
    width: 1px;
    background: #8e928e;
}

.vscroll {
    position: absolute;
    left: 969px;
    right: 0;
    top: 76px;
    bottom: 0;
    background: #232623;
}
.vscroll-up {
    display: block;
    width: 0;
    height: 0;
    margin: 5px 0 0 3px;
    border-left: 4px solid transparent;
    border-right: 4px solid transparent;
    border-bottom: 4px solid #5a605a;
}

/* strip below the arrangement */
.bottombar {
    flex: 1;
    display: flex;
    align-items: center;
    background: #252825;
    font-size: 9px;
    color: #9aa09a;
}
.bb-m { margin-left: 17px; }
.bb-s { margin-left: 33px; }
.bb-power {
    width: 11px;
    height: 11px;
    margin-left: 32px;
    color: #3c8fd0;
}
.bb-std {
    width: 38px;
    margin-left: 37px;
}
.bb-std + .arrow {
    margin-left: 0;
    border-left-width: 3px;
    border-right-width: 3px;
    border-top-width: 4px;
}
.bb-lines {
    width: 8px;
    height: 6px;
    margin-left: 10px;
}
.bb-left {
    margin-left: 11px;
    border-top: 4px solid transparent;
    border-bottom: 4px solid transparent;
    border-right: 5px solid #5a605a;
}
.hscroll {
    flex: none;
    width: 123px;
    height: 4px;
    margin-left: 8px;
    background: #7c827c;
}
.bb-right {
    margin-left: 723px;
    border-top: 4px solid transparent;
    border-bottom: 4px solid transparent;
    border-left: 5px solid #5a605a;
}
.zoom-small {
    margin-left: 10px;
    border-left: 4px solid transparent;
    border-right: 4px solid transparent;
    border-bottom: 5px solid #7c827c;
}
.zoom-track {
    position: relative;
    flex: none;
    width: 52px;
    height: 1px;
    margin-left: 5px;
    background: #8a908a;
}
.zoom-knob {
    position: absolute;
    left: 2px;
    top: -5px;
    width: 3px;
    height: 10px;
    background: #8a908a;
}
.zoom-big {
    margin-left: 4px;
    border-left: 6px solid transparent;
    border-right: 6px solid transparent;
    border-bottom: 8px solid #7c827c;
}
.bb-corner {
    width: 9px;
    height: 13px;
    margin-left: 7px;
    color: #5a605a;
}

/* transport bar */
.transport {
    position: relative;
    flex: none;
    height: 42px;
    display: flex;
    box-sizing: border-box;
    background: #131413;
    border-bottom: 6px solid #2f312f;
    color: #b4b9b3;
}
.wedge {
    flex: none;
    width: 15px;
    background: #3a3f3a;
    clip-path: polygon(0 0, 11px 0, 100% 100%, 0 100%);
}
.tp {
    flex: none;
    display: flex;
    flex-direction: column;
    align-items: center;
    justify-content: flex-end;
    padding-bottom: 3px;
}
.tp-label {
    font-size: 8.200px;
    line-height: 11px;
    color: #797e79;
    white-space: nowrap;
}
.tp-label .arrow {
    border-left-width: 3px;
    border-right-width: 3px;
    border-top-width: 4px;
}
.tp-midi {
    width: 28px;
    margin-left: 30px;
    color: #6d726d;
}
.tp-midi svg {
    width: 20px;
    height: 14px;
    margin-bottom: 3px;
}
.tp-perf {
    width: 58px;
    margin-left: 5px;
    align-items: stretch;
}
.meter {
    height: 4px;
    margin: 0 0 2px 1px;
    width: 54px;
    background: #2e302e;
}
.meter-led {
    display: block;
    width: 4px;
    height: 4px;
    background: #4fc3d8;
}
.meter-low {
    height: 5px;
    margin-bottom: 4px;
}
.spinner {
    flex: none;
    width: 20px;
    height: 20px;
    margin: 9px 0 0 12px;
    color: #8a8f8a;
}
.tp-time {
    width: 118px;
    margin-left: 18px;
}
.time-main {
    font-size: 16px;
    font-weight: bold;
    letter-spacing: 0.300px;
    line-height: 20px;
    color: #c5c9c4;
    white-space: nowrap;
}
.transport-btns {
    flex: none;
    display: flex;
    align-items: center;
    margin-left: 13px;
    margin-top: 2px;
    height: 34px;
    color: #b4b9b3;
}
.tb-1 { width: 9px; height: 10px; }
.tb-2 { width: 15px; height: 10px; margin-left: 10px; }
.tb-3 { width: 15px; height: 10px; margin-left: 11px; }
.tb-4 { width: 9px; height: 10px; margin-left: 6px; }
.tb-5 { width: 10px; height: 10px; margin-left: 12px; }
.stop {
    flex: none;
    width: 17px;
    height: 17px;
    margin-left: 18px;
    background: #b9bdb9;
}
.play-wrap {
    position: relative;
    flex: none;
    width: 15px;
    height: 16px;
    margin-left: 15px;
}
.play {
    width: 14px;
    height: 16px;
}
.cursor {
    position: absolute;
    left: 6px;
    top: 12px;
    width: 10px;
    height: 14px;
}
.record {
    flex: none;
    width: 17px;
    height: 17px;
    margin-left: 11px;
    border-radius: 50%;
    background: #b9bdb9;
}
.loop-btn {
    flex: none;
    width: 27px;
    height: 16px;
    margin-left: 13px;
    color: #8a8f8a;
}
.locators {
    flex: none;
    margin-left: 15px;
    padding-top: 6px;
    font-size: 11.800px;
    line-height: 12.500px;
    color: #c5c9c4;
}
.loc {
    display: flex;
    gap: 8px;
}
.loc-key {
    width: 7px;
    font-weight: bold;
    color: #555a55;
}
.tp-sync {
    width: 30px;
    margin-left: 7px;
}
.tp-val {
    font-size: 11px;
    line-height: 18px;
    color: #c5c9c4;
}
.metro {
    flex: none;
    width: 95px;
    margin-left: 9px;
    padding-top: 7px;
    color: #797e79;
}
.metro-icons {
    display: flex;
    align-items: center;
    gap: 9px;
    height: 11px;
}
.metro-icons svg {
    width: 13px;
    height: 8px;
}
.metro-icons .metro-dot {
    width: 8px;
    margin-left: 5px;
}
.metro-icons .metro-small {
    width: 10px;
    height: 9px;
}
.metro-bottom {
    display: flex;
    align-items: center;
    margin-top: 3px;
}
.metro-gear {
    width: 9px;
    height: 9px;
    margin-left: 1px;
}
.metro-pin {
    width: 13px;
    height: 8px;
    margin: 0 8px 0 13px;
}
.tp-beat {
    width: 36px;
    margin-left: 5px;
}
.tp-key {
    width: 24px;
    margin-left: 9px;
}
.tp-tempo {
    width: 40px;
    margin-left: 7px;
}
.levels {
    flex: none;
    width: 76px;
    margin-left: 10px;
    padding-top: 8px;
}
.lvl {
    width: 56px;
    height: 8px;
    background: repeating-linear-gradient(90deg, #1e2a33 0 1px, #141a1e 1px 2px);
}
.lvl-top {
    height: 7px;
    background: linear-gradient(#3a3c3a 2px, #1d1e1d 2px, #1d1e1d 4px, #3a3c3a 4px);
}
.lvl-row {
    display: flex;
    align-items: center;
    margin-top: 6px;
}
.lvl-fill {
    display: block;
    width: 42px;
    height: 8px;
    background: repeating-linear-gradient(90deg, #6a9dc0 0 1px, #4f7f9f 1px 2px);
}
.toggle {
    position: relative;
    width: 14px;
    height: 8px;
    margin-left: 6px;
    border-radius: 4px;
    background: #45d0d0;
}
.toggle-dot {
    position: absolute;
    right: 1px;
    top: 1px;
    width: 6px;
    height: 6px;
    border-radius: 50%;
    background: #123040;
}
.tabs {
    position: absolute;
    right: 0;
    top: 0;
    bottom: 0;
    width: 167px;
    display: flex;
    background: #3b403b;
    clip-path: polygon(12px 0, 100% 0, 100% 100%, 0 100%);
    font-size: 10px;
    color: #c0c4bf;
}
.tab {
    display: flex;
    align-items: center;
    justify-content: center;
    border-left: 1px solid #2f342f;
    box-sizing: border-box;
    height: 100%;
}
.tab-edit { width: 65px; padding-left: 12px; border-left: 0; }
.tab-mix { width: 47px; }
.tab-browse { width: 55px; }
```
